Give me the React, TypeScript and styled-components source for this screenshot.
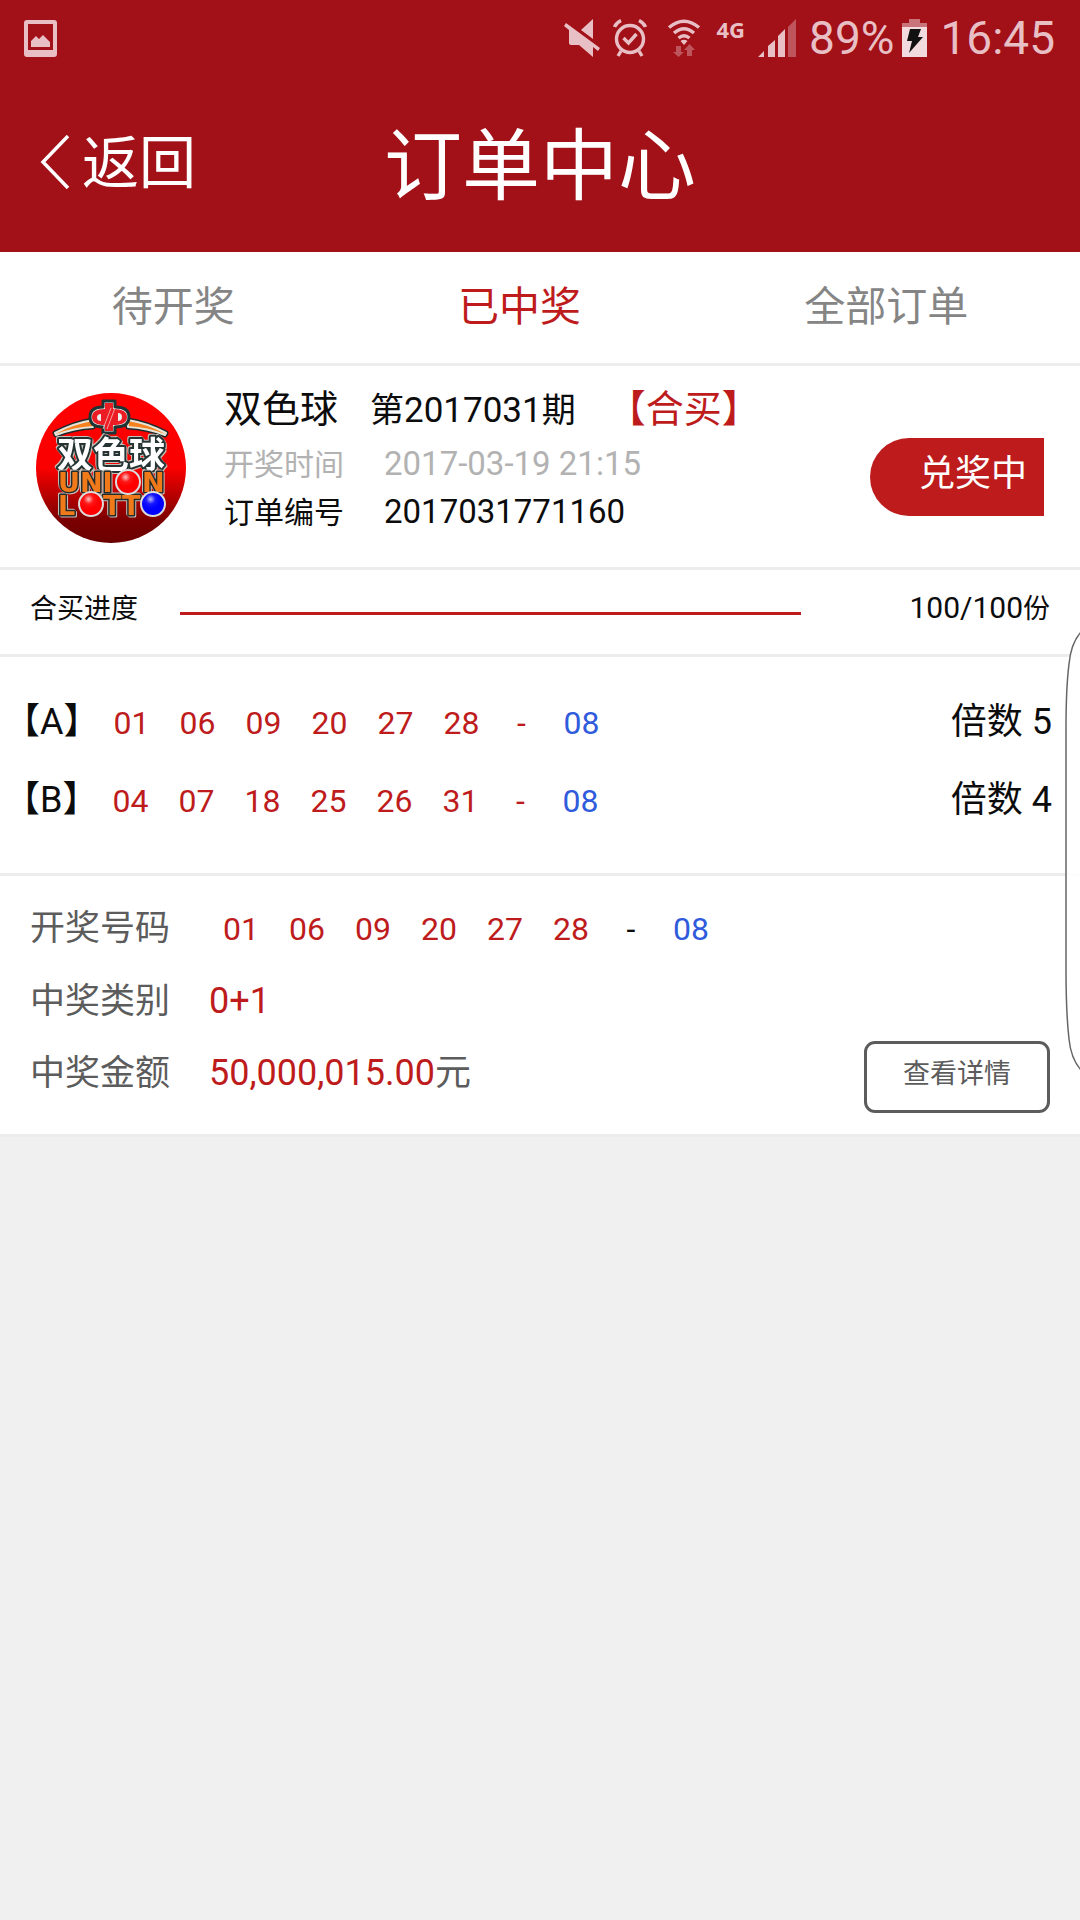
import React from "react";
import styled, { createGlobalStyle } from "styled-components";

const color = {
  header: "#a21018",
  accent: "#be1c1c",
  blue: "#2f5bdc",
  line: "#ededed",
  status: "#e8bfc4",
  text: "#0c0c0c",
  label: "#5c5c5c",
};

const Global = createGlobalStyle`
  * { box-sizing: border-box; }
  body {
    margin: 0;
    background: #f0f0f0;
    color: ${color.text};
    font-family: Roboto, "Noto Sans CJK SC", sans-serif;
    font-weight: 400;
  }
  button { font: inherit; color: inherit; border: 0; background: none; padding: 0; cursor: pointer; }
  h1, h2, p, dl, dt, dd, ul { margin: 0; padding: 0; font-weight: inherit; }
`;

const Page = styled.div`
  position: relative;
`;

const Header = styled.header`
  background: ${color.header};
  color: #fff;
`;

const StatusBar = styled.div`
  display: flex;
  align-items: center;
  height: 76px;
  padding: 0 25px 0 24px;
  color: ${color.status};
  font-size: 46px;
  line-height: 76px;
`;

const StatusIcons = styled.div`
  display: flex;
  align-items: center;
  margin-left: auto;
  gap: 13px;
`;

const IconPair = styled.div`
  display: flex;
  align-items: center;
  gap: 8px;
`;

const Connection = styled.div`
  display: flex;
  align-items: center;
  gap: 16px;
  height: 76px;
  padding-left: 7px;
`;

const Network = styled.span`
  align-self: flex-start;
  font: 700 22px/58px "Noto Sans", sans-serif;
`;

const TitleBar = styled.div`
  display: grid;
  grid-template-columns: 1fr auto 1fr;
  align-items: center;
  height: 176px;
  padding: 0 40px;
`;

const BackButton = styled.button`
  display: flex;
  align-items: center;
  gap: 12px;
  font-size: 57px;
  line-height: 80px;

  svg {
    margin-bottom: 4px;
  }
`;

const Title = styled.h1`
  padding-top: 8px;
  font-size: 78px;
  line-height: 112px;
`;

const Tabs = styled.nav`
  display: flex;
  justify-content: space-around;
  height: 114px;
  padding-bottom: 9px;
  background: #fff;
  border-bottom: 3px solid ${color.line};
`;

const Tab = styled.button<{ $active?: boolean }>`
  font-size: 41px;
  color: ${(p) => (p.$active ? color.accent : "#858585")};
`;

const Section = styled.section<{ $pad: string }>`
  display: flex;
  padding: ${(p) => p.$pad};
  background: #fff;
  border-bottom: 3px solid ${color.line};
`;

const Logo = styled.svg`
  flex: none;
  width: 150px;
  height: 150px;
  margin: 8px 38px 0 0;
`;

const Summary = styled.div`
  flex: 1;
`;

const NameLine = styled.div`
  display: flex;
  align-items: baseline;
  gap: 32px;
  height: 48px;
  margin-bottom: 8px;
  line-height: 48px;
`;

const GameName = styled.h2<{ $accent?: boolean }>`
  font-size: 38px;
  color: ${(p) => (p.$accent ? color.accent : "inherit")};
`;

const Issue = styled.span`
  font-size: 34px;
`;

const Num = styled.span<{ $size: number }>`
  font-size: ${(p) => p.$size}px;
  line-height: 1;
`;

const InfoLine = styled.div<{ $muted?: boolean }>`
  display: flex;
  align-items: baseline;
  gap: 40px;
  height: 48px;
  font-size: 30px;
  line-height: 48px;
  color: ${(p) => (p.$muted ? "#b2b2b2" : "inherit")};
`;

const Badge = styled.span`
  align-self: flex-start;
  height: 78px;
  margin-top: 53px;
  padding: 0 17px 0 49px;
  border-radius: 39px 0 0 39px;
  background: ${color.accent};
  color: #fff;
  font-size: 36px;
  line-height: 72px;
`;

const ProgressLabel = styled.span`
  font-size: 27px;
  line-height: 36px;
`;

const ProgressTrack = styled.div`
  flex: 1;
  align-self: flex-end;
  height: 3px;
  margin: 0 42px 12px;
  background: ${color.line};
`;

const ProgressFill = styled.div`
  height: 100%;
  background: ${color.accent};
`;

const ProgressValue = styled(ProgressLabel)`
  flex: 0 0 207px;
  text-align: right;
`;

const Bets = styled.ul`
  flex: 1;
  list-style: none;
`;

const Bet = styled.li`
  display: flex;
  align-items: baseline;
  height: 78px;
  font-size: 36px;
  line-height: 78px;
`;

const Multiple = styled.span`
  margin-left: auto;
`;

const NumberRow = styled.span<{ $dash: string; $start: number }>`
  display: flex;
  gap: 30px;
  margin-left: ${(p) => p.$start}px;
  font-size: 32px;
  color: ${color.accent};

  i {
    width: 24px;
    font-style: normal;
    text-align: center;
    color: ${(p) => p.$dash};
  }
  b {
    width: 36px;
    font-weight: 400;
  }
  b:last-child {
    color: ${color.blue};
  }
`;

const Results = styled.dl`
  flex: 1;
  padding-bottom: 4px;
`;

const Result = styled.div`
  display: flex;
  align-items: baseline;
  height: 72px;
  font-size: 35px;
  line-height: 72px;
  color: ${color.label};
`;

const ResultValue = styled.dd`
  margin-left: 39px;
  font-size: 36px;
`;

const Red = styled.span`
  color: ${color.accent};
`;

const DetailButton = styled.button`
  align-self: flex-end;
  width: 186px;
  height: 72px;
  padding-bottom: 12px;
  border: 3px solid ${color.label};
  border-radius: 11px;
  color: ${color.label};
  font-size: 27px;
`;

const EdgePanel = styled.svg`
  position: absolute;
  top: 628px;
  right: 0;
  width: 16px;
  height: 446px;
`;

function PictureIcon() {
  return (
    <svg width="33" height="37" viewBox="0 0 33 37" fill="currentColor">
      <path fillRule="evenodd" d="M3 0h27a3 3 0 0 1 3 3v31a3 3 0 0 1-3 3H3a3 3 0 0 1-3-3V3a3 3 0 0 1 3-3zm1 4v26h25V4z" />
      <path d="M7 27v-6l5-5 3 3 4-4 7 7v5z" />
    </svg>
  );
}

function MuteIcon() {
  return (
    <svg width="36" height="38" viewBox="0 0 36 38" fill="currentColor">
      <path d="M29 0v20L17 11z" />
      <path d="M0 7l2-3 34 25-2 3-5-4v10L15 26H7q-2 0-2-2V11z" />
    </svg>
  );
}

function AlarmIcon() {
  return (
    <svg width="34" height="38" viewBox="0 0 34 38" fill="none" stroke="currentColor" strokeWidth="3.4">
      <circle cx="17" cy="20" r="13.5" />
      <path d="M10.500 19l5 5 8-9M8 32l-3 5M26 32l3 5M1.500 8Q3 4 8 1.500M32.500 8Q31 4 26 1.500" />
    </svg>
  );
}

function WifiIcon() {
  return (
    <svg width="34" height="38" viewBox="0 0 34 38" fill="none" stroke="currentColor" strokeWidth="3.4">
      <path d="M2 8.500Q17-4 32 8.500M7 14Q17 5.500 27 14M11.500 19Q17 14.500 22.500 19" />
      <path d="M13.500 22Q17 19.500 20.500 22L17 26z" fill="currentColor" stroke="none" />
      <path d="M9 27h5v6h3l-5.500 5L6 33h3zM20 37v-6h-3l5.500-6 5.500 6h-3v6z" fill="currentColor" stroke="none" opacity=".4" />
    </svg>
  );
}

function SignalIcon() {
  return (
    <svg width="38" height="38" viewBox="0 0 38 38" fill="currentColor">
      <path d="M0 38l6-6v6zM10 38V27l7-6v17zM20 38V17l7-7v28z" />
      <path d="M30 38V8l8-8v38z" opacity=".4" />
    </svg>
  );
}

function BatteryIcon() {
  return (
    <svg width="25" height="38" viewBox="0 0 25 38">
      <path d="M0 8V4h7V0h11v4h7v4z" fill="#c9737a" />
      <path d="M0 8h25v30H0z" fill="#f2dbde" />
      <path d="M8 10h11l-3 8h5L7 34l3-12H5z" fill="#111" />
    </svg>
  );
}

function LotteryLogo() {
  const outlined = {
    paintOrder: "stroke",
    strokeLinejoin: "round",
    filter: "drop-shadow(1px 1px 0 #c4c0b8) drop-shadow(-1px -1px 0 #c4c0b8)",
  } as const;
  return (
    <Logo viewBox="0 0 150 150" role="img" aria-label="双色球 UNION LOTTO">
      <defs>
        <linearGradient id="disc" x1="0" y1="0" x2="0" y2="1">
          <stop offset="0" stopColor="#ff0000" />
          <stop offset=".5" stopColor="#fa0000" />
          <stop offset=".85" stopColor="#7a0000" />
          <stop offset="1" stopColor="#6c0000" />
        </linearGradient>
        <radialGradient id="redBall" cx=".4" cy=".3" r=".4">
          <stop offset="0" stopColor="#ffc0c0" />
          <stop offset=".5" stopColor="#ff1818" />
          <stop offset="1" stopColor="#f00" />
        </radialGradient>
        <radialGradient id="blueBall" cx=".4" cy=".3" r=".4">
          <stop offset="0" stopColor="#b8b8ff" />
          <stop offset=".5" stopColor="#1818ff" />
          <stop offset="1" stopColor="#00f" />
        </radialGradient>
      </defs>
      <circle cx="75" cy="75" r="75" fill="url(#disc)" />
      <g strokeLinejoin="round">
        <path d="M19 40Q38 30 57 27v7Q38 35 20 42zM130 40Q111 30 92 27v7q19 1 37 8z" fill="#f5821f" stroke="#1c2a2a" strokeWidth="5" />
        <path d="M19 40Q38 30 57 27v7Q38 35 20 42zM130 40Q111 30 92 27v7q19 1 37 8z" fill="#f5821f" stroke="#e8e4d8" strokeWidth="2" />
        <path d="M67 8h12v6q14 0 14 10T79 34v6H67v-6q-13 0-13-10t13-10z" fill="#e8e8e8" stroke="#1c3434" strokeWidth="3" />
        <path d="M69 10h8v6q14 0 14 8t-14 8v6h-8v-6q-13 0-13-8t13-8z" fill="#ec1c24" />
        <path d="M65 21q-4 0-4 3.500t4 3.500zM82 20q4 0 4 4t-4 4z" fill="#eee" />
        <path d="M75 15L67 36M79 15L71 36" stroke="#f4a0a0" strokeWidth="1" />
      </g>
      <g fontFamily='"Noto Sans CJK SC", sans-serif' fontWeight="700" fontSize="36">
        <text x="21" y="75" fill="#fff" stroke="#253333" strokeWidth="4" style={outlined}>双色球</text>
      </g>
      <g
        fontFamily='"DejaVu Sans", sans-serif'
        fontWeight="700"
        fontSize="27"
        fill="#f07a1a"
        stroke="#252b2b"
        strokeWidth="3"
        style={outlined}
      >
        <text x="22" y="99">UNI</text>
        <text x="106" y="99">N</text>
        <text x="22" y="122">L</text>
        <text x="67" y="122">TT</text>
      </g>
      <g stroke="#ddd" strokeWidth="2">
        <circle cx="92" cy="89" r="12" fill="url(#redBall)" />
        <circle cx="55" cy="111" r="12" fill="url(#redBall)" />
        <circle cx="117" cy="111" r="12" fill="url(#blueBall)" />
      </g>
    </Logo>
  );
}

function Numbers({ reds, blue, start, dash = color.accent }: { reds: string[]; blue: string; start: number; dash?: string }) {
  return (
    <NumberRow $dash={dash} $start={start}>
      {reds.map((n) => (
        <b key={n}>{n}</b>
      ))}
      <i>-</i>
      <b>{blue}</b>
    </NumberRow>
  );
}

const bets = [
  { id: "A", reds: ["01", "06", "09", "20", "27", "28"], blue: "08", multiple: 5 },
  { id: "B", reds: ["04", "07", "18", "25", "26", "31"], blue: "08", multiple: 4 },
];

const progress = { sold: 100, total: 100 };

export default function App() {
  return (
    <Page>
      <Global />
      <Header>
        <StatusBar>
          <PictureIcon />
          <StatusIcons>
            <MuteIcon />
            <AlarmIcon />
            <Connection>
              <WifiIcon />
              <Network>4G</Network>
            </Connection>
            <SignalIcon />
            <IconPair>
              <span>89%</span>
              <BatteryIcon />
            </IconPair>
            <span>16:45</span>
          </StatusIcons>
        </StatusBar>
        <TitleBar>
          <BackButton type="button">
            <svg width="30" height="54" viewBox="0 0 30 54" fill="none" stroke="#fff" strokeWidth="3.5">
              <path d="M28 1L3 27l25 26" />
            </svg>
            返回
          </BackButton>
          <Title>订单中心</Title>
        </TitleBar>
      </Header>

      <Tabs>
        <Tab type="button">待开奖</Tab>
        <Tab type="button" $active>已中奖</Tab>
        <Tab type="button">全部订单</Tab>
      </Tabs>

      <main>
        <Section $pad="19px 36px 24px">
          <LotteryLogo />
          <Summary>
            <NameLine>
              <GameName>双色球</GameName>
              <Issue>第<Num $size={35}>2017031</Num>期</Issue>
              <GameName as="span" $accent>【合买】</GameName>
            </NameLine>
            <InfoLine $muted>
              <span>开奖时间</span>
              <Num $size={33}>2017-03-19 21:15</Num>
            </InfoLine>
            <InfoLine>
              <span>订单编号</span>
              <Num $size={33}>2017031771160</Num>
            </InfoLine>
          </Summary>
          <Badge>兑奖中</Badge>
        </Section>

        <Section $pad="21px 30px 27px">
          <ProgressLabel id="progress-label">合买进度</ProgressLabel>
          <ProgressTrack
            role="progressbar"
            aria-labelledby="progress-label"
            aria-valuenow={progress.sold}
            aria-valuemax={progress.total}
          >
            <ProgressFill style={{ width: `${(progress.sold / progress.total) * 100}%` }} />
          </ProgressTrack>
          <ProgressValue>
            <Num $size={30}>{progress.sold}/{progress.total}</Num>份
          </ProgressValue>
        </Section>

        <Section $pad="26px 28px 34px 4px">
          <Bets>
            {bets.map((bet) => (
              <Bet key={bet.id}>
                <span>【{bet.id}】</span>
                <Numbers reds={bet.reds} blue={bet.blue} start={14} />
                <Multiple>倍数 {bet.multiple}</Multiple>
              </Bet>
            ))}
          </Bets>
        </Section>

        <Section $pad="17px 30px 21px">
          <Results>
            <Result>
              <dt>开奖号码</dt>
              <dd>
                <Numbers reds={["01", "06", "09", "20", "27", "28"]} blue="08" start={53} dash={color.text} />
              </dd>
            </Result>
            <Result>
              <dt>中奖类别</dt>
              <ResultValue><Red>0+1</Red></ResultValue>
            </Result>
            <Result>
              <dt>中奖金额</dt>
              <ResultValue><Red>50,000,015.00</Red>元</ResultValue>
            </Result>
          </Results>
          <DetailButton type="button">查看详情</DetailButton>
        </Section>
      </main>

      <EdgePanel viewBox="0 0 16 446" aria-hidden="true">
        <path
          d="M17 4Q7 15 5 36Q2 60 2 100V340Q2 385 5 411Q7 431 17 442"
          fill="#fff"
          fillOpacity=".85"
          stroke="#666"
          strokeWidth="1.5"
        />
      </EdgePanel>
    </Page>
  );
}
